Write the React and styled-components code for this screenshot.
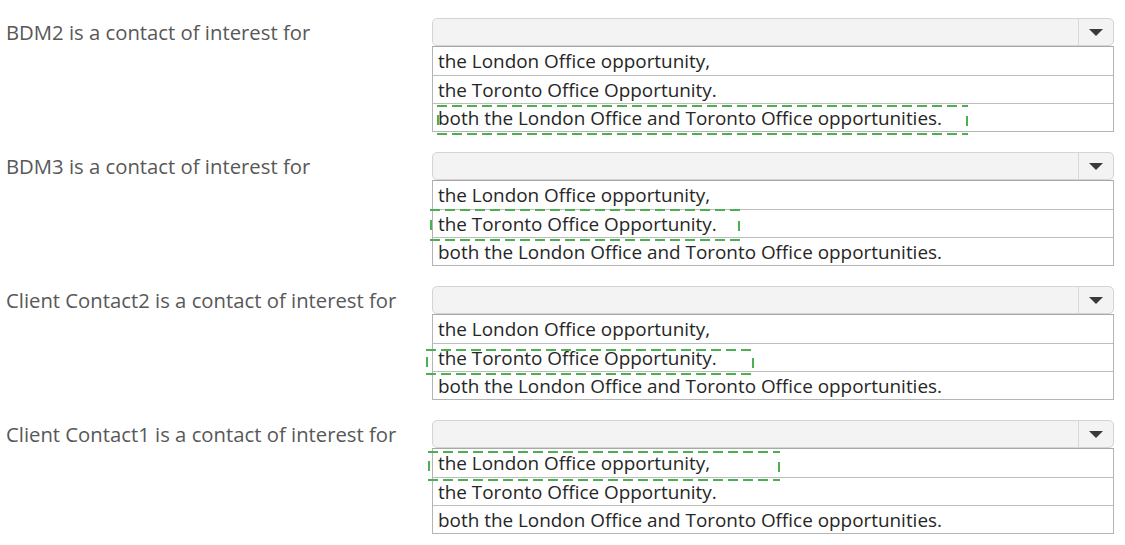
import React from 'react';
import styled, { createGlobalStyle } from 'styled-components';

const GlobalStyle = createGlobalStyle`
    body {
        margin: 0;
        background: #ffffff;
        font-family: "Open Sans", "Noto Sans", sans-serif;
    }
`

const options = [
    'the London Office opportunity,',
    'the Toronto Office Opportunity.',
    'both the London Office and Toronto Office opportunities.',
];

const questions = [
    { label: 'BDM2 is a contact of interest for', mark: { left: 5, top: 87, width: 531, height: 28 } },
    { label: 'BDM3 is a contact of interest for', mark: { left: -2, top: 57, width: 310, height: 30 } },
    { label: 'Client Contact2 is a contact of interest for', mark: { left: -6, top: 63, width: 328, height: 24 } },
    { label: 'Client Contact1 is a contact of interest for', mark: { left: -4, top: 31, width: 352, height: 28 } },
];

function DashedMark({ left, top, width, height }) {
    const mid = height / 2;
    return (
        <Mark $left={left} $top={top} $width={width} $height={height}>
            <svg width={width} height={height + 2} viewBox={`0 0 ${width} ${height + 2}`}>
                <g stroke="#4caf50" strokeWidth="2" fill="none">
                    <line x1="0" y1="1" x2={width} y2="1" strokeDasharray="10 5" />
                    <line x1="0" y1={height + 1} x2={width} y2={height + 1} strokeDasharray="10 5" />
                    <line x1="1" y1={mid - 4} x2="1" y2={mid + 6} />
                    <line x1={width - 1} y1={mid - 3} x2={width - 1} y2={mid + 7} />
                </g>
            </svg>
        </Mark>
    );
}

export default function App() {
    return (
        <Page>
            <GlobalStyle />
            {questions.map((q) => (
                <Question key={q.label}>
                    <Label>{q.label}</Label>
                    <Control>
                        <Select>
                            <SelectValue />
                            <ArrowBox>
                                <svg width="16" height="9" viewBox="0 0 16 9">
                                    <polygon points="1,1 15,1 8,8" fill="#3a3a3a" />
                                </svg>
                            </ArrowBox>
                        </Select>
                        <OptionList>
                            {options.map((o) => (
                                <OptionRow key={o}>{o}</OptionRow>
                            ))}
                        </OptionList>
                        <DashedMark {...q.mark} />
                    </Control>
                </Question>
            ))}
        </Page>
    );
}

const Page = styled.div`
    width: 1125px;
    padding-top: 18px;
    display: flex;
    flex-direction: column;
    gap: 20px;
`

const Question = styled.div`
    display: grid;
    grid-template-columns: 432px 682px;
    align-items: start;
`

const Label = styled.div`
    padding-left: 6px;
    height: 28px;
    display: flex;
    align-items: center;
    font-size: 20.3px;
    color: #585858;
    white-space: nowrap;
`

const Control = styled.div`
    position: relative;
    display: flex;
    flex-direction: column;
`

const Select = styled.div`
    height: 28px;
    box-sizing: border-box;
    display: flex;
    background: #f3f3f3;
    border: 1px solid #d4d4d4;
    border-radius: 5px;
`

const SelectValue = styled.div`
    flex: 1;
`

const ArrowBox = styled.div`
    width: 34px;
    border-left: 1px solid #d8d8d8;
    display: flex;
    align-items: center;
    justify-content: center;
`

const OptionList = styled.div`
    display: flex;
    flex-direction: column;
    border: 1px solid #b4b4b4;
    border-top: 1px solid #a8a8a8;
`

const OptionRow = styled.div`
    height: 28px;
    box-sizing: border-box;
    display: flex;
    align-items: center;
    padding-left: 5px;
    font-size: 18.9px;
    color: #262626;
    white-space: nowrap;
    border-top: 1px solid #bdbdbd;

    &:first-child {
        border-top: none;
    }
`

const Mark = styled.div`
    position: absolute;
    left: ${(p) => p.$left}px;
    top: ${(p) => p.$top}px;
    width: ${(p) => p.$width}px;
    height: ${(p) => p.$height + 2}px;
    pointer-events: none;

    svg {
        display: block;
    }
`
